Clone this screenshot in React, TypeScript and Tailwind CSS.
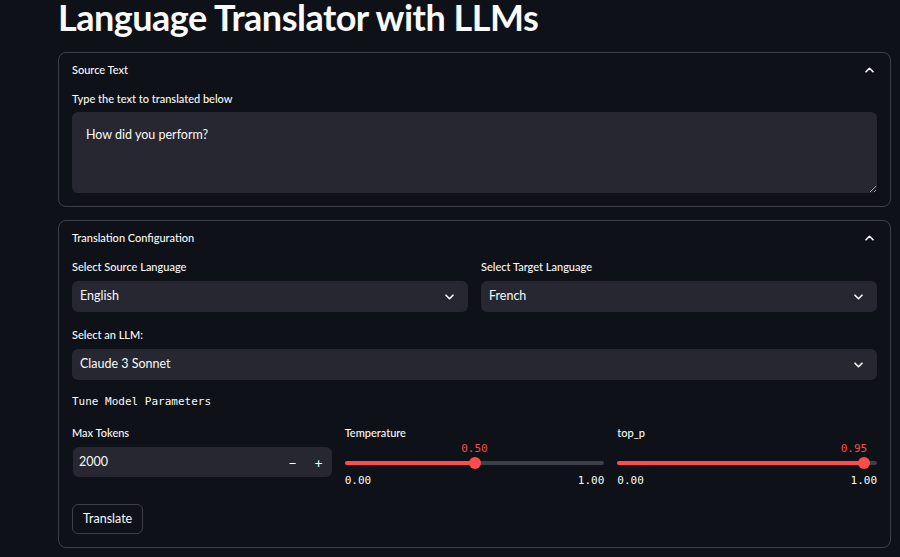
import { useState } from "react";

function ChevronUp() {
  return (
    <svg width="9" height="6" viewBox="0 0 9 6" fill="none">
      <path d="M1 4.8L4.5 1.3L8 4.8" stroke="#fafafa" strokeWidth="1.6" strokeLinecap="round" strokeLinejoin="round" />
    </svg>
  );
}

function ChevronDown() {
  return (
    <svg width="9" height="6" viewBox="0 0 9 6" fill="none">
      <path d="M1 1.2L4.5 4.7L8 1.2" stroke="#fafafa" strokeWidth="1.6" strokeLinecap="round" strokeLinejoin="round" />
    </svg>
  );
}

function Expander({ title, children }: { title: string; children: React.ReactNode }) {
  return (
    <div className="rounded-lg border border-[rgba(250,250,250,0.2)]">
      <div className="flex h-[34px] items-center justify-between pl-[13px] pr-[16px] text-[11px] font-medium text-[#fafafa]">
        <span>{title}</span>
        <ChevronUp />
      </div>
      <div className="px-[13px] pb-[13px] pt-[4px]">{children}</div>
    </div>
  );
}

function Label({ children }: { children: React.ReactNode }) {
  return <div className="mb-[6px] h-4 text-[11px] font-medium leading-4 text-[#fafafa]">{children}</div>;
}

function Select({ value }: { value: string }) {
  return (
    <div className="flex h-[31px] items-center justify-between rounded-md bg-[#262730] pl-[8px] pr-[14px] text-[12.5px] text-[#fafafa]">
      <span>{value}</span>
      <ChevronDown />
    </div>
  );
}

function Slider({ label, value, endAlign }: { label: string; value: number; endAlign?: boolean }) {
  const pct = value * 100;
  return (
    <div className="flex-1">
      <Label>{label}</Label>
      <div className="relative h-[26px]">
        <div
          className={`absolute -top-[6px] font-['DejaVu_Sans_Mono',monospace] text-[11px] leading-4 text-[#ff4b4b] ${endAlign ? "-translate-x-[88%]" : "-translate-x-1/2"}`}
          style={{ left: `${pct}%` }}
        >
          {value.toFixed(2)}
        </div>
        <div className="absolute left-0 right-0 top-[14px] h-1 rounded-full bg-[#3d3f4a]">
          <div className="h-1 rounded-full bg-[#ff4b4b]" style={{ width: `${pct}%` }} />
        </div>
        <div
          className="absolute top-[10px] h-3 w-3 -translate-x-1/2 rounded-full bg-[#ff4b4b]"
          style={{ left: `${pct}%` }}
        />
      </div>
      <div className="flex justify-between font-['DejaVu_Sans_Mono',monospace] text-[11px] leading-4 text-[#fafafa]">
        <span>0.00</span>
        <span>1.00</span>
      </div>
    </div>
  );
}

export default function App() {
  const [text, setText] = useState("How did you perform?");

  return (
    <div className="h-[557px] overflow-hidden bg-[#0e1117] font-['Lato',sans-serif]">
      <div className="ml-[58px] w-[833px]">
        <h1 className="-mt-[5px] mb-[12px] h-[45px] text-[36px] font-bold leading-[45px] tracking-[-0.5px] text-[#fafafa]">
          Language Translator with LLMs
        </h1>

        <Expander title="Source Text">
          <Label>Type the text to translated below</Label>
          <textarea
            value={text}
            onChange={(e) => setText(e.target.value)}
            className="-mt-px block h-[81px] w-full resize-y rounded-md bg-[#262730] px-[14px] py-[14px] font-['Lato',sans-serif] text-[12.5px] text-[#fafafa] outline-none"
          />
        </Expander>

        <div className="h-[13px]" />

        <Expander title="Translation Configuration">
          <div className="flex gap-[13px]">
            <div className="flex-1">
              <Label>Select Source Language</Label>
              <Select value="English" />
            </div>
            <div className="flex-1">
              <Label>Select Target Language</Label>
              <Select value="French" />
            </div>
          </div>

          <div className="mt-[15px]">
            <Label>Select an LLM:</Label>
            <Select value="Claude 3 Sonnet" />
          </div>

          <div className="mt-[14px] h-4 font-['DejaVu_Sans_Mono',monospace] text-[11px] leading-4 text-[#fafafa]">
            Tune Model Parameters
          </div>

          <div className="mt-[15px] flex gap-[13px]">
            <div className="flex-1">
              <Label>Max Tokens</Label>
              <div className="ml-px flex h-[30px] items-center rounded-md bg-[#262730] pl-[6px] text-[12.5px] text-[#fafafa]">
                <span className="flex-1">2000</span>
                <button className="flex h-[30px] w-[26px] items-center justify-center text-[14px]">−</button>
                <button className="flex h-[30px] w-[26px] items-center justify-center text-[14px]">+</button>
              </div>
            </div>
            <Slider label="Temperature" value={0.5} />
            <Slider label="top_p" value={0.95} endAlign />
          </div>

          <button className="mt-[15px] h-[30px] rounded-md border border-[rgba(250,250,250,0.2)] px-[10px] text-[12.5px] text-[#fafafa]">
            Translate
          </button>
        </Expander>
      </div>
    </div>
  );
}
